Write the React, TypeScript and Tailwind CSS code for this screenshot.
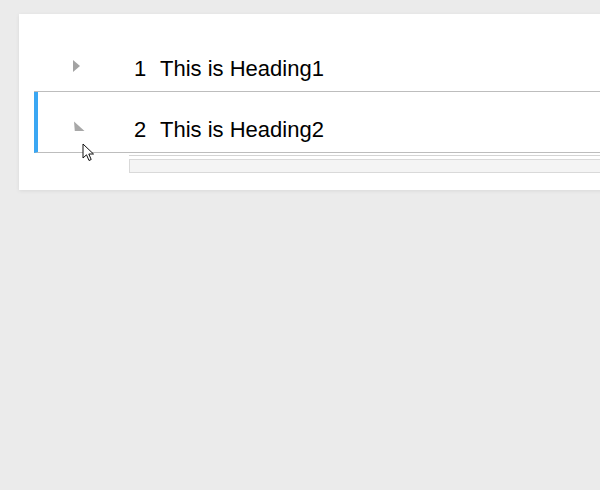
import React from "react";

const rows = [
  { n: 1, title: "This is Heading1", active: false },
  { n: 2, title: "This is Heading2", active: true },
];

function Caret({ turned }: { turned: boolean }) {
  if (turned) {
    return (
      <svg width="12" height="12" viewBox="0 0 12 12" className="-mt-[1px]">
        <path d="M1 0.5 L1.8 10 L11.5 10 Z" fill="#a8a8a8" />
      </svg>
    );
  }
  return (
    <svg width="10" height="14" viewBox="0 0 10 14" className="-ml-[1px] -mt-[2px]">
      <path d="M1 1 L8 7 L1 13 Z" fill="#a3a3a3" />
    </svg>
  );
}

function Cursor() {
  return (
    <svg width="14" height="20" viewBox="0 0 14 20" className="absolute left-[82px] top-[143px]">
      <path
        d="M1 1 L1 15 L4.5 11.8 L7 17.5 L9.2 16.5 L6.8 11 L11.5 11 Z"
        fill="#fff"
        stroke="#111"
        strokeWidth="1"
        strokeLinejoin="round"
      />
    </svg>
  );
}

export default function App() {
  return (
    <div className="relative h-[490px] w-[600px] overflow-hidden bg-[#ebebeb] font-['Liberation_Sans',Arial,sans-serif]">
      <div className="ml-[19px] mt-[14px] w-[640px] bg-white pt-[17px] pb-[17px] pl-[15px] shadow-[0_1px_4px_rgba(0,0,0,0.08)]">
        {rows.map((r) => (
          <div
            key={r.n}
            className={
              r.active
                ? "flex h-[61px] items-start border-b border-l-4 border-b-[#bdbdbd] border-l-[#3aa7f3] pt-[26px]"
                : "flex h-[61px] items-start border-b border-b-[#bdbdbd] pl-[4px] pt-[26px]"
            }
          >
            <div className="flex w-[96px] justify-start pl-[35px] pt-[4px]">
              <Caret turned={r.active} />
            </div>
            <span className="w-[26px] text-[22px] leading-[24px] text-black">{r.n}</span>
            <span className="text-[22px] leading-[24px] text-black">{r.title}</span>
          </div>
        ))}
        <div className="ml-[95px] mt-[2px] border-t border-[#d4d4d4] pt-[3px]">
          <div className="h-[14px] border border-[#d9d9d9] bg-[#f4f4f4]" />
        </div>
      </div>
      <Cursor />
    </div>
  );
}
